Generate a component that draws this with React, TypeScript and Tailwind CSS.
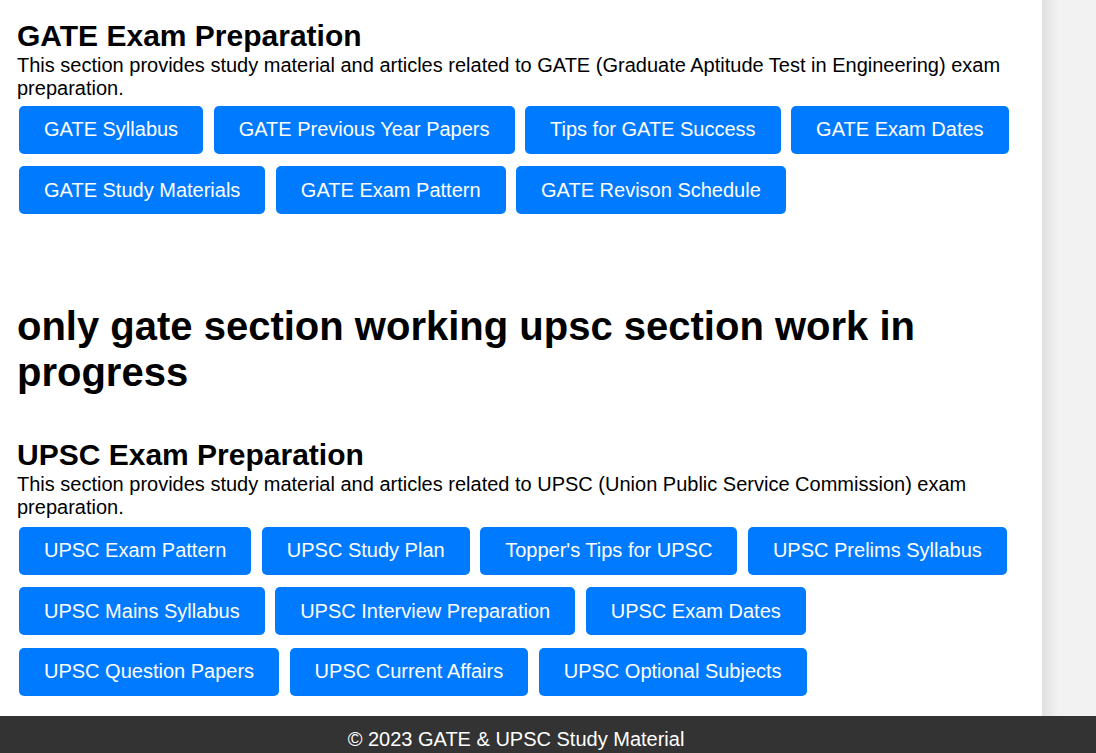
import React from 'react'

const gateLinks = [
  'GATE Syllabus',
  'GATE Previous Year Papers',
  'Tips for GATE Success',
  'GATE Exam Dates',
  'GATE Study Materials',
  'GATE Exam Pattern',
  'GATE Revison Schedule',
]

const upscLinks = [
  'UPSC Exam Pattern',
  'UPSC Study Plan',
  "Topper's Tips for UPSC",
  'UPSC Prelims Syllabus',
  'UPSC Mains Syllabus',
  'UPSC Interview Preparation',
  'UPSC Exam Dates',
  'UPSC Question Papers',
  'UPSC Current Affairs',
  'UPSC Optional Subjects',
]

function LinkButtons({ links, className }: { links: string[]; className: string }) {
  return (
    <div className={`flex flex-wrap gap-x-[10.5px] gap-y-[12.5px] ml-[2px] ${className}`}>
      {links.map((l) => (
        <a
          key={l}
          href="#"
          className="h-12 px-[25px] flex items-center rounded-[5px] bg-[#007bff] text-white text-[20px] leading-[23px]"
        >
          {l}
        </a>
      ))}
    </div>
  )
}

export default function App() {
  return (
    <div className="h-[753px] overflow-hidden flex flex-col bg-white text-black font-['Liberation_Sans',Arial,sans-serif]">
      <div className="flex h-[716px]">
        <main className="w-[1042px] shrink-0 pl-[17px] pt-[19px]">
          <section>
            <h2 className="text-[30px] leading-[34.5px] font-bold">GATE Exam Preparation</h2>
            <p className="text-[20px] leading-[23px]">
              This section provides study material and articles related to GATE (Graduate Aptitude Test in Engineering) exam preparation.
            </p>
            <LinkButtons links={gateLinks} className="mt-[6px]" />
          </section>

          <h1 className="mt-[88.5px] text-[40px] leading-[46px] font-bold">
            only gate section working upsc section work in progress
          </h1>

          <section className="mt-[43.5px]">
            <h2 className="text-[30px] leading-[34.5px] font-bold">UPSC Exam Preparation</h2>
            <p className="text-[20px] leading-[23px]">
              This section provides study material and articles related to UPSC (Union Public Service Commission) exam preparation.
            </p>
            <LinkButtons links={upscLinks} className="mt-[8px]" />
          </section>
        </main>
        <aside className="flex-1 bg-[linear-gradient(to_right,#e0e0e0,#f2f2f2_16px)]" />
      </div>
      <footer className="h-[37px] overflow-hidden bg-[#333333] text-white text-center pr-[64px] pt-[12px]">
        <p className="text-[20px] leading-[23px]">© 2023 GATE &amp; UPSC Study Material</p>
      </footer>
    </div>
  )
}
